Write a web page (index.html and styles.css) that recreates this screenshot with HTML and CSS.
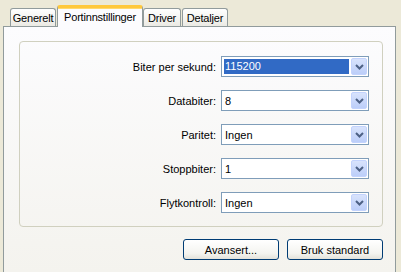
FILE: index.html
```html
<!DOCTYPE html>
<html lang="no">
<head>
    <meta charset="UTF-8">
    <title>Egenskaper for COM-port</title>
    <link rel="stylesheet" href="styles.css">
</head>
<body>

    <div class="faner">
        <div class="fane fane-generelt">Generelt</div>
        <div class="fane fane-port aktiv">Portinnstillinger</div>
        <div class="fane fane-driver">Driver</div>
        <div class="fane fane-detaljer">Detaljer</div>
    </div>

    <div class="side">
        <div class="gruppe">
            <div class="rad">
                <label>Biter per sekund:</label>
                <div class="kombo fokus">
                    <span class="verdi">115200</span>
                    <span class="pil"><svg width="9" height="6" viewBox="0 0 9 6"><path d="M1 1 L4.5 4.5 L8 1" fill="none" stroke="#4d6185" stroke-width="2"/></svg></span>
                </div>
            </div>
            <div class="rad">
                <label>Databiter:</label>
                <div class="kombo">
                    <span class="verdi">8</span>
                    <span class="pil"><svg width="9" height="6" viewBox="0 0 9 6"><path d="M1 1 L4.5 4.5 L8 1" fill="none" stroke="#4d6185" stroke-width="2"/></svg></span>
                </div>
            </div>
            <div class="rad">
                <label>Paritet:</label>
                <div class="kombo">
                    <span class="verdi">Ingen</span>
                    <span class="pil"><svg width="9" height="6" viewBox="0 0 9 6"><path d="M1 1 L4.5 4.5 L8 1" fill="none" stroke="#4d6185" stroke-width="2"/></svg></span>
                </div>
            </div>
            <div class="rad">
                <label>Stoppbiter:</label>
                <div class="kombo">
                    <span class="verdi">1</span>
                    <span class="pil"><svg width="9" height="6" viewBox="0 0 9 6"><path d="M1 1 L4.5 4.5 L8 1" fill="none" stroke="#4d6185" stroke-width="2"/></svg></span>
                </div>
            </div>
            <div class="rad">
                <label>Flytkontroll:</label>
                <div class="kombo">
                    <span class="verdi">Ingen</span>
                    <span class="pil"><svg width="9" height="6" viewBox="0 0 9 6"><path d="M1 1 L4.5 4.5 L8 1" fill="none" stroke="#4d6185" stroke-width="2"/></svg></span>
                </div>
            </div>
        </div>

        <div class="knapper">
            <button>Avansert...</button>
            <button>Bruk standard</button>
        </div>
    </div>

</body>
</html>
```

FILE: styles.css
```css
html, body {
    height: 100%;
}

body {
    margin: 0;
    padding: 0 5px 0 3px;
    display: flex;
    flex-direction: column;
    background-color: #ece9d8;
    color: #000000;
    font-family: Tahoma, "Liberation Sans", Arial, sans-serif;
    font-size: 11px;
    overflow: hidden;
}

.faner {
    display: flex;
    align-items: flex-end;
    height: 26px;
}

.fane {
    height: 18px;
    box-sizing: border-box;
    padding: 0;
    display: flex;
    align-items: center;
    justify-content: center;
    white-space: nowrap;
    letter-spacing: -0.2px;
    border: 1px solid #919b9c;
    border-bottom: none;
    border-radius: 3px 3px 0 0;
    background: linear-gradient(#ffffff, #f3f3ef 60%, #ebeae4);
}

/* tab widths as on the original dialog */
.fane-generelt { width: 46px; margin-left: 7px; }
.fane-port     { width: 86px; margin-left: 1px; }
.fane-driver   { width: 38px; }
.fane-detaljer { width: 46px; margin-left: 1px; }

.fane.aktiv {
    height: 22px;
    margin-bottom: -1px;
    border-top: 3px solid #ffc83c;
    border-color: #ffc83c #919b9c #919b9c #919b9c;
    box-shadow: inset 0 1px 0 #ffd86e;
    background: #fcfcfe;
    position: relative;
    z-index: 1;
    padding-bottom: 1px;
}

.side {
    flex: 1;
    border: 1px solid #919b9c;
    border-bottom: none;
    background: linear-gradient(#fcfcfe, #f4f3ee);
    padding: 14px 12px 0 15px;
}

.gruppe {
    height: 186px;
    box-sizing: border-box;
    border: 1px solid #d0d0bf;
    border-radius: 4px;
    padding: 14px 13px 0 0;
    display: flex;
    flex-direction: column;
    gap: 13px;
}

.rad {
    display: flex;
    align-items: center;
    gap: 5px;
}

.rad label {
    width: 196px;
    text-align: right;
}

.kombo {
    flex: 1;
    height: 21px;
    box-sizing: border-box;
    border: 1px solid #7f9db9;
    background-color: #ffffff;
    display: flex;
    align-items: center;
    padding: 1px;
}

.verdi {
    flex: 1;
    padding-left: 2px;
}

.kombo.fokus .verdi {
    margin-left: 1px;
    margin-right: 2px;
    padding-left: 1px;
    height: 15px;
    line-height: 15px;
    background-color: #316ac5;
    color: #ffffff;
}

.pil {
    width: 16px;
    height: 17px;
    box-sizing: border-box;
    border: 1px solid #c3d3fd;
    border-radius: 2px;
    background: linear-gradient(#d8e3fc, #bccef9);
    display: flex;
    align-items: center;
    justify-content: center;
}

.knapper {
    display: flex;
    justify-content: flex-end;
    gap: 8px;
    margin-top: 12px;
}

button {
    width: 96px;
    height: 21px;
    border: 1px solid #003c74;
    border-radius: 3px;
    background: linear-gradient(#ffffff, #f4f4f0 70%, #e3e2da);
    font-family: inherit;
    font-size: 11px;
    color: #000000;
    padding: 0;
}
```
